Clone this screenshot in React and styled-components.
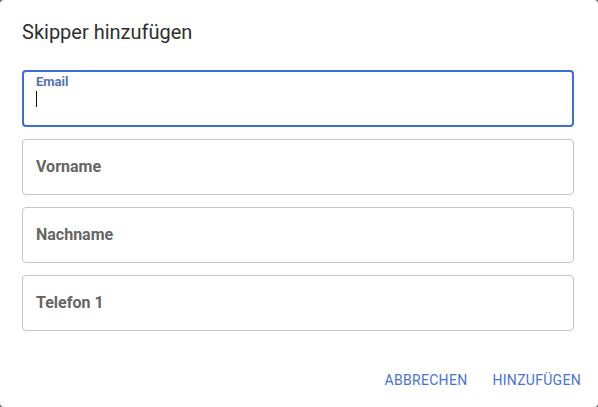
import React from 'react'
import styled, { createGlobalStyle } from 'styled-components'

const GlobalStyle = createGlobalStyle`
  html, body {
    margin: 0;
    padding: 0;
    background: #5f5f5f;
    font-family: Roboto, "Liberation Sans", Arial, sans-serif;
  }
  * { box-sizing: border-box; }
`

const Dialog = styled.div`
  width: 598px;
  height: 407px;
  background: #fff;
  border-radius: 4px;
  display: flex;
  flex-direction: column;
  padding: 0 24px 0 22px;
`

const Title = styled.h2`
  margin: 0;
  padding-top: 19px;
  font-size: 20px;
  font-weight: 400;
  line-height: 26px;
  color: #2f2f2f;
`

const Form = styled.div`
  display: flex;
  flex-direction: column;
  gap: 12px;
  margin-top: 25px;
`

const Field = styled.div`
  position: relative;
  height: ${p => (p.$focused ? '57px' : '56px')};
  border: ${p => (p.$focused ? '2px solid #3a6fd6' : '1px solid #c6c6c6')};
  border-radius: 4px;
  padding: ${p => (p.$focused ? '3px 12px' : '0 13px')};
  display: flex;
  flex-direction: column;
  justify-content: ${p => (p.$focused ? 'flex-start' : 'center')};
`

const Label = styled.label`
  font-weight: 700;
  font-size: ${p => (p.$small ? '13px' : '16px')};
  line-height: ${p => (p.$small ? '14px' : '20px')};
  color: ${p => (p.$small ? '#5872b3' : '#666')};
`

const Caret = styled.span`
  display: block;
  width: 1px;
  height: 16px;
  margin-top: 2px;
  background: #111;
`

const Actions = styled.div`
  margin-top: auto;
  display: flex;
  justify-content: flex-end;
  gap: 25px;
  padding: 0 0 19px 0;
  margin-right: -7px;
`

const TextButton = styled.button`
  border: none;
  background: none;
  padding: 0;
  font-family: inherit;
  font-size: 14px;
  letter-spacing: 0.3px;
  text-transform: uppercase;
  color: #4a72d4;
  cursor: pointer;
`

function App() {
  return (
    <>
      <GlobalStyle />
      <Dialog>
        <Title>Skipper hinzufügen</Title>
        <Form>
          <Field $focused>
            <Label $small>Email</Label>
            <Caret />
          </Field>
          <Field><Label>Vorname</Label></Field>
          <Field><Label>Nachname</Label></Field>
          <Field><Label>Telefon 1</Label></Field>
        </Form>
        <Actions>
          <TextButton>Abbrechen</TextButton>
          <TextButton>Hinzufügen</TextButton>
        </Actions>
      </Dialog>
    </>
  )
}

export default App
